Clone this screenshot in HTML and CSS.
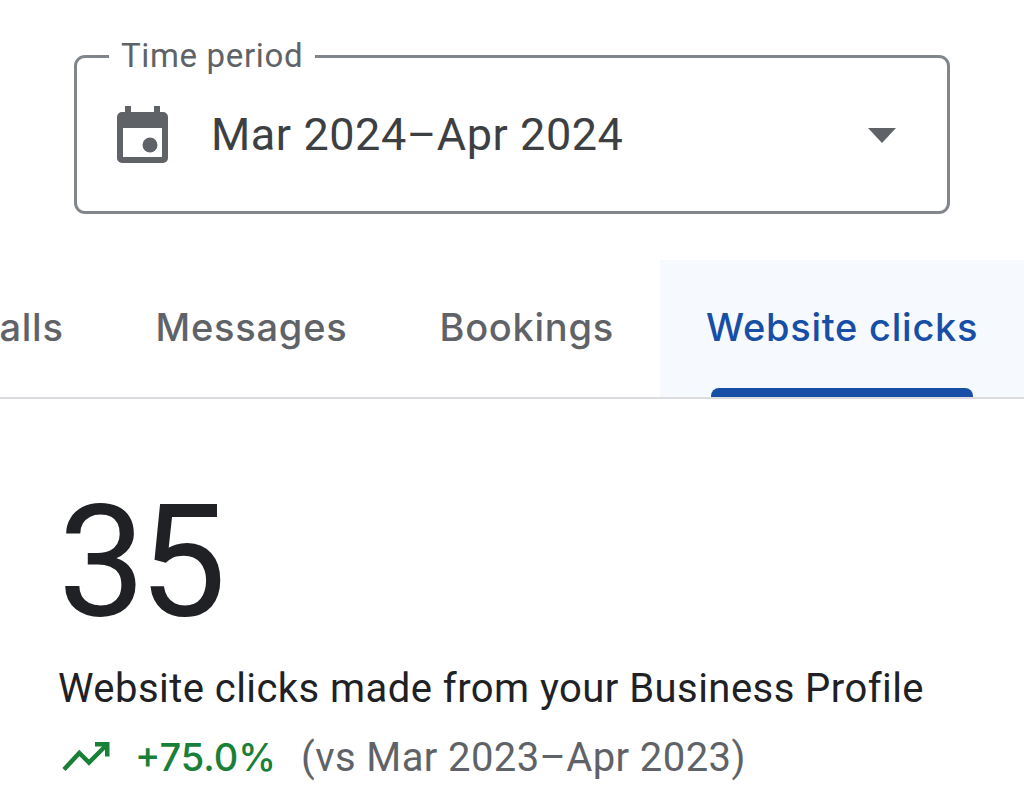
FILE: index.html
```html
<!DOCTYPE html>
<html lang="en">
<head>
<meta charset="utf-8">
<title>Performance</title>
<link rel="stylesheet" href="styles.css">
</head>
<body>
<main class="page">
  <section class="filter">
    <fieldset class="field">
      <legend class="field-label">Time period</legend>
      <div class="field-row">
        <svg class="cal-icon" viewBox="0 0 51 57" aria-hidden="true"><path fill-rule="evenodd" d="M5 6h3V0h6v6h23V0h6v6h3a5 5 0 0 1 5 5v41a5 5 0 0 1-5 5H5a5 5 0 0 1-5-5V11a5 5 0 0 1 5-5zM6 22v29h39V22z"/><circle cx="33" cy="39" r="7.500"/></svg>
        <span class="field-value">Mar 2024–Apr 2024</span>
        <span class="caret"></span>
      </div>
    </fieldset>
  </section>
  <nav class="tabs">
    <div class="tab">Calls</div>
    <div class="tab">Messages</div>
    <div class="tab">Bookings</div>
    <div class="tab tab-active">Website clicks<span class="tab-bar"></span></div>
  </nav>
  <section class="stat">
    <div class="stat-number">35</div>
    <div class="stat-label">Website clicks made from your Business Profile</div>
    <div class="stat-delta">
      <svg class="trend-icon" viewBox="0 0 48 30" aria-hidden="true"><path d="M2 27.500 17.300 11 27 20.500 44 3.500" fill="none" stroke="currentColor" stroke-width="4.500"/><path d="M33 0h14.500v14.500H43V4.500H33z"/></svg>
      <span class="delta-value">+75.0%</span>
      <span class="delta-compare">(vs Mar 2023–Apr 2023)</span>
    </div>
  </section>
</main>
</body>
</html>
```
FILE: styles.css
```css
* { box-sizing: border-box; }
html, body { margin: 0; background: #fff; }
.page { width: 1024px; height: 812px; overflow: hidden; font-family: Roboto, sans-serif; }
.filter { padding: 36px 74px 0; }
.field { margin: 0; padding: 0 51px 0 40px; height: 178px; border: 3px solid #80868b; border-radius: 11px; min-width: 0; }
.field-label { margin-left: -8px; padding: 0 12px; font-size: 33px; letter-spacing: .65px; line-height: 40px; color: #5f6368; }
.field-row { display: flex; align-items: center; height: 118px; margin-top: -1px; }
.cal-icon { width: 51px; height: 57px; fill: #5f6368; flex: none; }
.field-value { margin-left: 43px; font-size: 45px; letter-spacing: .55px; color: #3c4043; flex: 1; }
.caret { width: 0; height: 0; margin-top: 2px; border-left: 14px solid transparent; border-right: 14px solid transparent; border-top: 15px solid #5f6368; }
.tabs { display: flex; justify-content: flex-end; margin-top: 46px; height: 139px; border-bottom: 2px solid #dadce0; font-family: Inter, sans-serif; }
.tab { padding: 0 46px; font-size: 38px; letter-spacing: .75px; font-weight: 500; line-height: 134px; color: #5f6368; white-space: nowrap; flex: none; position: relative; }
.tab-active { width: 364px; background: #f6f9fe; color: #174ea6; }
.tab-bar { position: absolute; left: 51px; right: 51px; bottom: 0; height: 9px; background: #174ea6; border-radius: 8px 8px 0 0; }
.stat { padding: 0 58px; }
.stat-number { font-size: 156px; letter-spacing: -7px; line-height: 176px; margin-top: 75px; color: #202124; }
.stat-label { margin-top: 16px; font-size: 40px; line-height: 46px; color: #202124; letter-spacing: .45px; white-space: nowrap; }
.stat-delta { display: flex; align-items: center; margin-top: 22px; height: 46px; white-space: nowrap; }
.trend-icon { width: 48px; height: 30px; fill: #188038; color: #188038; margin-left: 4px; flex: none; }
.delta-value { margin-left: 25px; font-size: 38px; font-weight: 500; color: #188038; font-family: Inter, sans-serif; }
.delta-compare { margin-left: 25px; font-size: 40px; letter-spacing: .4px; color: #5f6368; }
```
